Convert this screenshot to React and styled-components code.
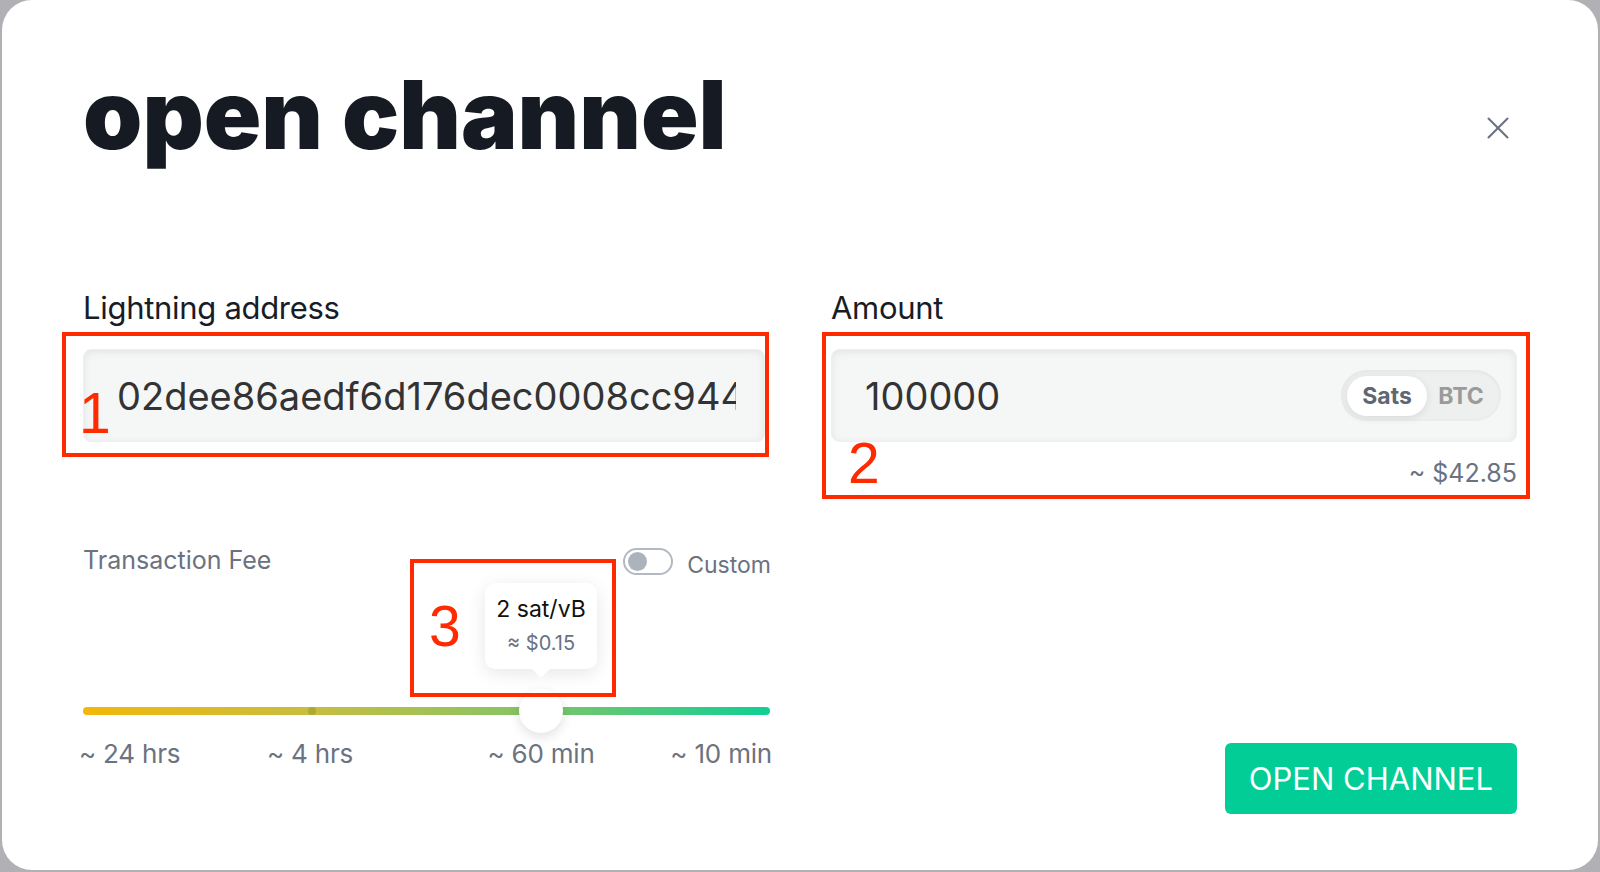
import React from 'react';
import styled, { createGlobalStyle } from 'styled-components';
import { X } from 'lucide-react';

const GlobalStyle = createGlobalStyle`
  html, body {
    margin: 0;
    padding: 0;
  }
  body {
    background: #b0b0b5;
    font-family: Inter, "Noto Sans", sans-serif;
    overflow: hidden;
  }
  * {
    box-sizing: border-box;
  }
`;

const fees = ['~ 24 hrs', '~ 4 hrs', '~ 60 min', '~ 10 min'];
const feeIndex = 2;

function App() {
  const pct = (feeIndex / (fees.length - 1)) * 100;

  return (
    <Backdrop>
      <GlobalStyle />
      <Modal>
        <Header>
          <Title>open channel</Title>
          <CloseButton aria-label="close">
            <X size={38} strokeWidth={1.3} />
          </CloseButton>
        </Header>

        <Form>
          <Column>
            <Label>Lightning address</Label>
            <Field>
              <TextInput readOnly value="02dee86aedf6d176dec0008cc944a1b2c3d4e5f6" />
            </Field>

            <FeeHeader>
              <FeeTitle>Transaction Fee</FeeTitle>
              <CustomToggle>
                <Switch>
                  <Knob />
                </Switch>
                <CustomLabel>Custom</CustomLabel>
              </CustomToggle>
            </FeeHeader>

            <Slider>
              <Track>
                {fees.map((f, i) =>
                  i > 0 && i < fees.length - 1 ? (
                    <Stop key={f} style={{ left: `${(i / (fees.length - 1)) * 100}%` }} />
                  ) : null
                )}
              </Track>
              <Thumb style={{ left: `${pct}%` }} />
              <Tip style={{ left: `${pct}%` }}>
                <TipRate>2 sat/vB</TipRate>
                <TipPrice>≈ $0.15</TipPrice>
              </Tip>
            </Slider>
            <StopLabels>
              {fees.map((f, i) => (
                <StopLabel key={f} $align={i === 0 ? 'left' : i === fees.length - 1 ? 'right' : 'center'}>
                  {f}
                </StopLabel>
              ))}
            </StopLabels>
          </Column>

          <Column>
            <Label>Amount</Label>
            <Field>
              <TextInput readOnly value="100000" />
              <Units>
                <Unit $active>Sats</Unit>
                <Unit>BTC</Unit>
              </Units>
            </Field>
            <Fiat>~ $42.85</Fiat>
            <Actions>
              <PrimaryButton>OPEN CHANNEL</PrimaryButton>
            </Actions>
          </Column>
        </Form>

        <Mark style={{ left: 60, top: 332, width: 707, height: 125 }} />
        <MarkNumber style={{ left: 77, top: 385 }}>1</MarkNumber>
        <Mark style={{ left: 820, top: 332, width: 708, height: 167 }} />
        <MarkNumber style={{ left: 846, top: 435 }}>2</MarkNumber>
        <Mark style={{ left: 408, top: 559, width: 206, height: 138 }} />
        <MarkNumber style={{ left: 427, top: 598 }}>3</MarkNumber>
      </Modal>
    </Backdrop>
  );
}

export default App;

const Backdrop = styled.div`
  width: 1600px;
  height: 872px;
  padding: 0 2px 2px;
`;

const Modal = styled.div`
  position: relative;
  height: 870px;
  background: #ffffff;
  border-radius: 30px;
  padding: 67px 81px 0;
`;

const Header = styled.div`
  display: flex;
  justify-content: space-between;
  align-items: flex-start;
`;

const Title = styled.h1`
  margin: 0;
  font-family: Inter, sans-serif;
  font-size: 95px;
  line-height: 1;
  font-weight: 900;
  letter-spacing: 0;
  color: #151a23;
`;

const CloseButton = styled.button`
  margin-top: 42px;
  width: 38px;
  height: 38px;
  padding: 0;
  border: 0;
  background: none;
  color: #6b7280;
  display: flex;
  align-items: center;
  justify-content: center;
`;

const Form = styled.div`
  display: grid;
  grid-template-columns: 682px minmax(0, 1fr);
  column-gap: 66px;
  margin-top: 126px;
`;

const Column = styled.div`
  display: flex;
  flex-direction: column;
  min-width: 0;
`;

const Label = styled.div`
  font-size: 31px;
  line-height: 40px;
  color: #171c26;
  letter-spacing: -0.3px;
`;

const Field = styled.div`
  margin-top: 21px;
  height: 93px;
  display: flex;
  align-items: center;
  padding: 0 15px 0 33px;
  background: #f5f7f7;
  border: 1px solid #eef0f0;
  border-radius: 8px;
  box-shadow: inset 0 2px 9px rgba(0, 0, 0, 0.08);
`;

const TextInput = styled.input`
  flex: 1;
  min-width: 0;
  margin-right: 13px;
  border: 0;
  outline: none;
  background: transparent;
  font-family: Inter, sans-serif;
  font-size: 38px;
  color: #333333;
  padding: 0;
`;

const Units = styled.div`
  flex: none;
  display: flex;
  align-items: center;
  height: 51px;
  width: 160px;
  padding: 0 6px;
  border-radius: 26px;
  background: #eef0f0;
  box-shadow: inset 0 1px 5px rgba(0, 0, 0, 0.06);
`;

const Unit = styled.div`
  height: 40px;
  width: ${p => (p.$active ? '80px' : '68px')};
  display: flex;
  align-items: center;
  justify-content: center;
  border-radius: 20px;
  font-size: 23px;
  font-weight: 700;
  color: ${p => (p.$active ? '#5f6773' : '#9a9a9a')};
  background: ${p => (p.$active ? '#ffffff' : 'transparent')};
  box-shadow: ${p => (p.$active ? '0 2px 8px rgba(0, 0, 0, 0.09)' : 'none')};
`;

const Fiat = styled.div`
  margin-top: 15px;
  text-align: right;
  font-size: 25px;
  line-height: 32px;
  color: #6b7280;
`;

const FeeHeader = styled.div`
  margin-top: 103px;
  margin-right: -6px;
  display: flex;
  justify-content: space-between;
  align-items: flex-start;
`;

const FeeTitle = styled.div`
  font-size: 25px;
  line-height: 30px;
  color: #6b7280;
`;

const CustomToggle = styled.div`
  margin-top: 3px;
  display: flex;
  align-items: flex-start;
  gap: 14px;
`;

const Switch = styled.div`
  width: 50px;
  height: 27px;
  border-radius: 14px;
  border: 2px solid #b3b9c1;
  background: #ffffff;
  display: flex;
  align-items: center;
  padding-left: 3px;
`;

const Knob = styled.div`
  width: 19px;
  height: 19px;
  border-radius: 50%;
  background: #adb3bc;
`;

const CustomLabel = styled.div`
  margin-top: 3px;
  font-size: 23px;
  line-height: 28px;
  color: #6b7280;
`;

const Slider = styled.div`
  position: relative;
  margin-top: 110px;
  margin-right: -5px;
  height: 44px;
  display: flex;
  align-items: center;
`;

const Track = styled.div`
  position: relative;
  width: 100%;
  height: 8px;
  border-radius: 4px;
  background: linear-gradient(90deg, #f3b70a 0%, #c8bd40 33%, #86c465 64%, #10cf94 100%);
`;

const Stop = styled.div`
  position: absolute;
  top: 0;
  width: 8px;
  height: 8px;
  border-radius: 50%;
  transform: translateX(-50%);
  background: rgba(60, 70, 0, 0.18);
`;

const Thumb = styled.div`
  position: absolute;
  top: 0;
  width: 44px;
  height: 44px;
  border-radius: 50%;
  transform: translateX(-50%);
  background: #ffffff;
  box-shadow: 0 4px 12px rgba(0, 0, 0, 0.12);
`;

const Tip = styled.div`
  position: absolute;
  bottom: calc(100% + 20px);
  width: 112px;
  height: 86px;
  padding-bottom: 4px;
  transform: translateX(-50%);
  background: #ffffff;
  border-radius: 10px;
  box-shadow: 0 4px 18px rgba(0, 0, 0, 0.1);
  display: flex;
  flex-direction: column;
  align-items: center;
  justify-content: center;

  &::after {
    content: '';
    position: absolute;
    left: 50%;
    bottom: -9px;
    transform: translateX(-50%);
    border-left: 9px solid transparent;
    border-right: 9px solid transparent;
    border-top: 9px solid #ffffff;
  }
`;

const TipRate = styled.div`
  font-size: 23px;
  line-height: 28px;
  color: #111111;
`;

const TipPrice = styled.div`
  margin-top: 9px;
  font-size: 20px;
  line-height: 22px;
  color: #6b7280;
`;

const StopLabels = styled.div`
  display: grid;
  grid-template-columns: 1fr 2fr 2fr 1fr;
  margin: 5px -7px 0 -4px;
`;

const StopLabel = styled.div`
  font-size: 26px;
  line-height: 32px;
  letter-spacing: -0.2px;
  color: #6b7280;
  white-space: nowrap;
  text-align: ${p => p.$align};
`;

const Actions = styled.div`
  margin-top: 254px;
  display: flex;
  justify-content: flex-end;
`;

const PrimaryButton = styled.button`
  height: 71px;
  padding: 0 24px;
  border: 0;
  border-radius: 6px;
  background: #03cd96;
  color: #ffffff;
  font-family: Inter, sans-serif;
  font-size: 31px;
  font-weight: 400;
`;

const Mark = styled.div`
  position: absolute;
  border: 4px solid #ff2a00;
  pointer-events: none;
`;

const MarkNumber = styled.div`
  position: absolute;
  font-family: "Liberation Sans", Arial, sans-serif;
  font-size: 57px;
  line-height: 1;
  color: #ff2a00;
  pointer-events: none;
`;
